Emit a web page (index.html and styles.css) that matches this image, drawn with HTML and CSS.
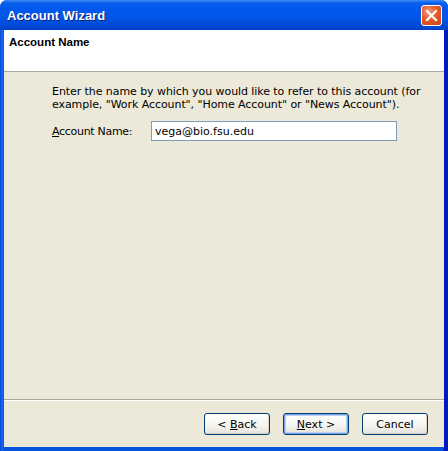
FILE: index.html
```html
<!DOCTYPE html>
<html>
<head>
    <meta charset="UTF-8">
    <title>Account Wizard</title>
    <link rel="stylesheet" href="styles.css">
</head>
<body>
    <div class="window">
        <div class="titlebar">
            <span class="title">Account Wizard</span>
            <div class="close-btn">
                <svg width="13" height="13" viewBox="0 0 13 13">
                    <path d="M2 2 L11 11 M11 2 L2 11" stroke="#fff" stroke-width="2.2" stroke-linecap="square"/>
                </svg>
            </div>
        </div>
        <div class="frame">
            <div class="header">
                <h1>Account Name</h1>
            </div>
            <div class="content">
                <p class="description">Enter the name by which you would like to refer to this account (for<br>example, "Work Account", "Home Account" or "News Account").</p>
                <div class="field-row">
                    <label for="account_name"><u>A</u>ccount Name:</label>
                    <input type="text" id="account_name" value="vega@bio.fsu.edu">
                </div>
            </div>
            <div class="footer">
                <button class="btn">&lt; <u>B</u>ack</button>
                <button class="btn btn-default"><u>N</u>ext &gt;</button>
                <button class="btn btn-cancel">Cancel</button>
            </div>
        </div>
    </div>
</body>
</html>
```

FILE: styles.css
```css
body {
    margin: 0;
    padding: 0;
    font-family: "DejaVu Sans", Verdana, sans-serif;
    font-size: 11px;
    color: #000;
}
.window {
    width: 448px;
    height: 451px;
    display: flex;
    flex-direction: column;
    background: linear-gradient(to right, #0842d8 0px, #166cf5 2px, #0855dd 4px, #0855dd 443px, #0019cf 444px, #001ea0 448px);
    border-radius: 7px 7px 0 0;
    overflow: hidden;
}
.titlebar {
    height: 30px;
    flex-shrink: 0;
    display: flex;
    align-items: center;
    justify-content: space-between;
    padding: 0 6px 0 7px;
    background: linear-gradient(to bottom, #3d8cf7 0px, #0a5ee9 3px, #0058ee 8px, #0255e6 18px, #0049d4 26px, #0040c8 30px);
}
.title {
    font-family: "Liberation Sans", Arial, sans-serif;
    color: #fff;
    font-weight: bold;
    font-size: 13px;
    text-shadow: 1px 1px 0 #0a1e7c;
    margin-top: 1px;
}
.close-btn {
    width: 19px;
    height: 19px;
    border: 1px solid #fff;
    border-radius: 3px;
    background: radial-gradient(circle at 35% 30%, #f39a7a 0%, #e5582d 45%, #c8411a 100%);
    display: flex;
    align-items: center;
    justify-content: center;
}
.frame {
    flex: 1;
    display: flex;
    flex-direction: column;
    margin: 0 4px 4px 4px;
    background-color: #ece9d8;
}
.header {
    height: 41px;
    background: #fff;
    border-bottom: 1px solid #aca899;
    padding: 0 5px;
}
.header h1 {
    margin: 0;
    padding-top: 6px;
    font-family: "Liberation Sans", Arial, sans-serif;
    font-size: 11.5px;
    font-weight: bold;
}
.content {
    flex: 1;
    padding: 13px 8px 0 48px;
}
.description {
    margin: 0;
    line-height: 13px;
    letter-spacing: -0.07px;
}
.field-row {
    display: flex;
    align-items: center;
    margin-top: 10px;
}
.field-row label {
    width: 99px;
    letter-spacing: -0.3px;
}
.field-row input {
    width: 246px;
    height: 20px;
    box-sizing: border-box;
    border: 1px solid #7f9db9;
    padding: 1px 3px;
    font-family: inherit;
    font-size: 11px;
    margin: 0;
}
.footer {
    border-top: 1px solid #aca899;
    box-shadow: inset 0 1px 0 #fff;
    height: 48px;
    display: flex;
    justify-content: flex-end;
    align-items: flex-start;
    padding: 13px 16px 0 0;
    gap: 13px;
    box-sizing: border-box;
}
.btn {
    width: 66px;
    height: 22px;
    border: 1px solid #003c74;
    border-radius: 3px;
    background: linear-gradient(to bottom, #ffffff 0%, #f4f3ee 60%, #e3e2da 100%);
    font-family: inherit;
    font-size: 11px;
    color: #000;
    padding: 0;
    box-shadow: inset -1px -1px 0 #d6d0c5;
}
.btn-default {
    box-shadow: inset 0 0 0 1px #7ea4e8, inset 0 0 0 2px #b7cdf5;
}
```
